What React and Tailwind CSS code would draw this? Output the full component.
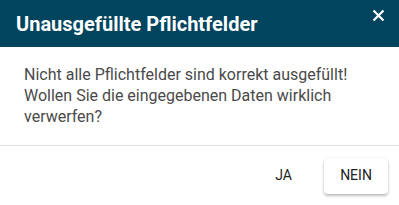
import React from 'react';

export default function App() {
  return (
    <div className="w-[399px] h-[205px] bg-white flex flex-col font-['Roboto',sans-serif]">
      <div className="h-[47px] bg-[#00445e] flex items-center justify-between pl-4 pr-[14px]">
        <h2 className="text-white text-[20px] font-bold leading-none">Unausgefüllte Pflichtfelder</h2>
        <button className="self-start mt-[8px] w-[14px] h-[14px] flex items-center justify-center">
          <svg width="13" height="13" viewBox="0 0 13 13">
            <path d="M1.5 1.5L11.5 11.5M11.5 1.5L1.5 11.5" stroke="white" strokeWidth="2.2" />
          </svg>
        </button>
      </div>
      <div className="px-6 pt-[17px] pb-[18px] text-[16px] leading-[21px] text-[#4a4a4a] border-b border-[#e0e0e0]">
        <p>Nicht alle Pflichtfelder sind korrekt ausgefüllt!</p>
        <p>Wollen Sie die eingegebenen Daten wirklich verwerfen?</p>
      </div>
      <div className="flex-1 flex items-center justify-end gap-4 pr-[11px]">
        <button className="h-9 px-4 text-[14px] font-normal uppercase text-[#222] rounded">Ja</button>
        <button className="h-9 w-16 text-[14px] font-normal uppercase text-[#222] rounded bg-white shadow-[0_2px_3px_rgba(0,0,0,0.25),0_0_2px_rgba(0,0,0,0.08)]">Nein</button>
      </div>
    </div>
  );
}
